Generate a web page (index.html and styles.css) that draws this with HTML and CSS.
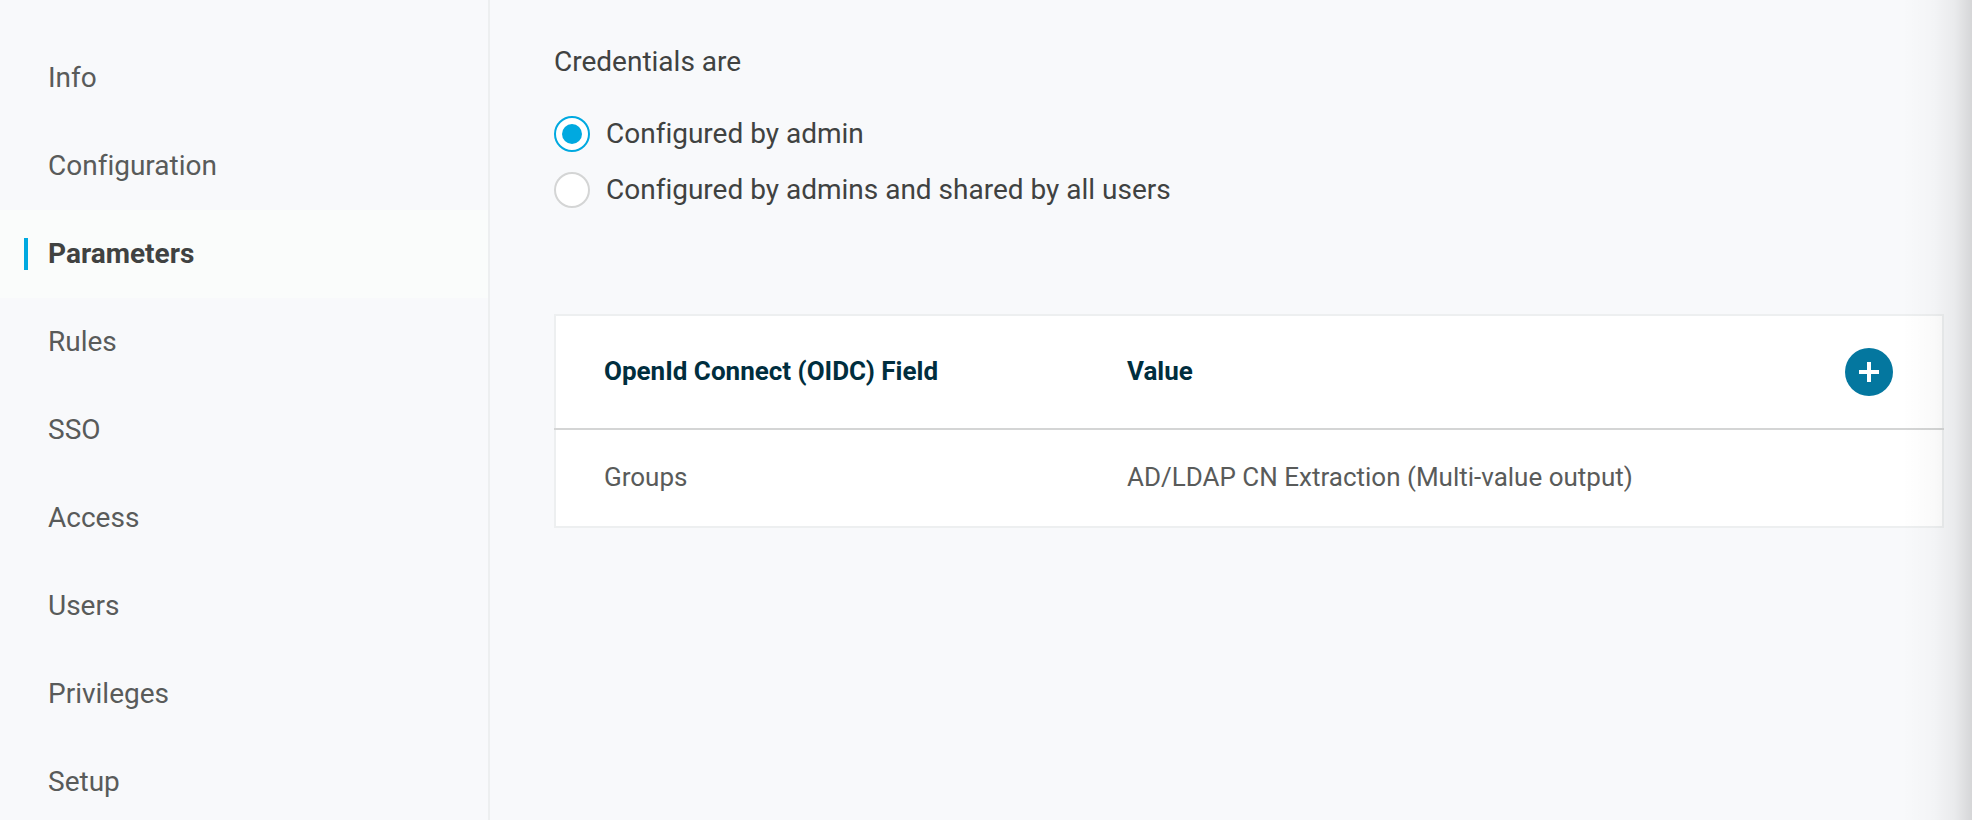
FILE: index.html
```html
<!DOCTYPE html>
<html lang="en">
<head>
<meta charset="utf-8">
<title>Parameters</title>
<link rel="stylesheet" href="styles.css">
</head>
<body>
<div class="layout">
  <nav class="sidebar" aria-label="Application settings">
    <a class="nav-item" href="#info">Info</a>
    <a class="nav-item" href="#configuration">Configuration</a>
    <a class="nav-item active" href="#parameters" aria-current="page">Parameters</a>
    <a class="nav-item" href="#rules">Rules</a>
    <a class="nav-item" href="#sso">SSO</a>
    <a class="nav-item" href="#access">Access</a>
    <a class="nav-item" href="#users">Users</a>
    <a class="nav-item" href="#privileges">Privileges</a>
    <a class="nav-item" href="#setup">Setup</a>
  </nav>
  <main class="content">
    <fieldset class="credentials">
      <legend class="credentials-title">Credentials are</legend>
      <label class="option"><input class="radio" type="radio" name="credentials" checked>Configured by admin</label>
      <label class="option"><input class="radio" type="radio" name="credentials">Configured by admins and shared by all users</label>
    </fieldset>
    <table class="fields">
      <thead>
        <tr>
          <th class="field-name" scope="col">OpenId Connect (OIDC) Field</th>
          <th scope="col">Value</th>
          <td class="actions">
            <button class="add" type="button" aria-label="Add parameter">
              <svg width="20" height="20" viewBox="0 0 20 20" aria-hidden="true"><path d="M8 0h4v8h8v4h-8v8H8v-8H0V8h8z" fill="#fff"/></svg>
            </button>
          </td>
        </tr>
      </thead>
      <tbody>
        <tr>
          <td>Groups</td>
          <td colspan="2">AD/LDAP CN Extraction (Multi-value output)</td>
        </tr>
      </tbody>
    </table>
  </main>
</div>
</body>
</html>
```

FILE: styles.css
```css
* {
  box-sizing: border-box;
}

body {
  margin: 0;
  background: #f8f9fb;
  color: #404241;
  font-family: Roboto, "Liberation Sans", sans-serif;
  font-size: 28px;
  font-variant-ligatures: none;
  line-height: 32px;
}

.layout {
  display: flex;
  position: relative;
  height: 100vh;
  overflow: hidden;
}

.layout::after {
  content: "";
  position: absolute;
  top: 0;
  right: 0;
  bottom: 0;
  width: 70px;
  pointer-events: none;
  background: linear-gradient(to right, rgba(0, 0, 0, 0), rgba(0, 0, 0, 0.02) 45%, rgba(0, 0, 0, 0.06) 75%, rgba(0, 0, 0, 0.14));
}

.sidebar {
  display: flex;
  flex: none;
  flex-direction: column;
  width: 490px;
  padding-top: 34px;
  border-right: 2px solid #edeff0;
}

.nav-item {
  display: flex;
  flex: none;
  align-items: center;
  height: 88px;
  padding-left: 48px;
  color: #595b5a;
  text-decoration: none;
}

.nav-item.active {
  padding-left: 24px;
  background: #fafcfb;
  color: #404241;
  font-weight: 700;
}

.nav-item.active::before {
  content: "";
  width: 4px;
  height: 32px;
  margin-right: 20px;
  background: #00a9e0;
}

.content {
  flex: 1;
  min-width: 0;
  padding: 46px 28px 0 64px;
}

.credentials {
  display: flex;
  flex-direction: column;
  gap: 20px;
  margin: 0 0 106px;
  padding: 0;
  border: 0;
}

.credentials-title {
  margin-bottom: 38px;
  padding: 0;
}

.option {
  display: flex;
  align-items: center;
  gap: 16px;
  height: 36px;
}

.radio {
  display: grid;
  flex: none;
  place-items: center;
  width: 36px;
  height: 36px;
  margin: 0;
  border: 2px solid #d4d5d5;
  border-radius: 50%;
  background: #fff;
  appearance: none;
}

.radio:checked {
  border-color: #00a9e0;
}

.radio:checked::before {
  content: "";
  width: 20px;
  height: 20px;
  border-radius: 50%;
  background: #00a9e0;
}

.fields {
  width: 100%;
  border: 2px solid #edeff0;
  border-collapse: collapse;
  background: #fff;
  color: #595b5a;
  font-size: 26px;
}

.fields th,
.fields td {
  height: 98px;
  padding: 0 0 2px 48px;
  text-align: left;
}

.fields thead th,
.fields thead td {
  height: 114px;
  border-bottom: 2px solid #d4d5d5;
  color: #002e3e;
}

.fields .field-name {
  width: 524px;
}

.fields .actions {
  width: 146px;
  padding: 0 48px 0 48px;
}

.add {
  display: grid;
  place-items: center;
  width: 48px;
  height: 48px;
  padding: 0;
  border: 0;
  border-radius: 50%;
  background: #04779f;
}
```
